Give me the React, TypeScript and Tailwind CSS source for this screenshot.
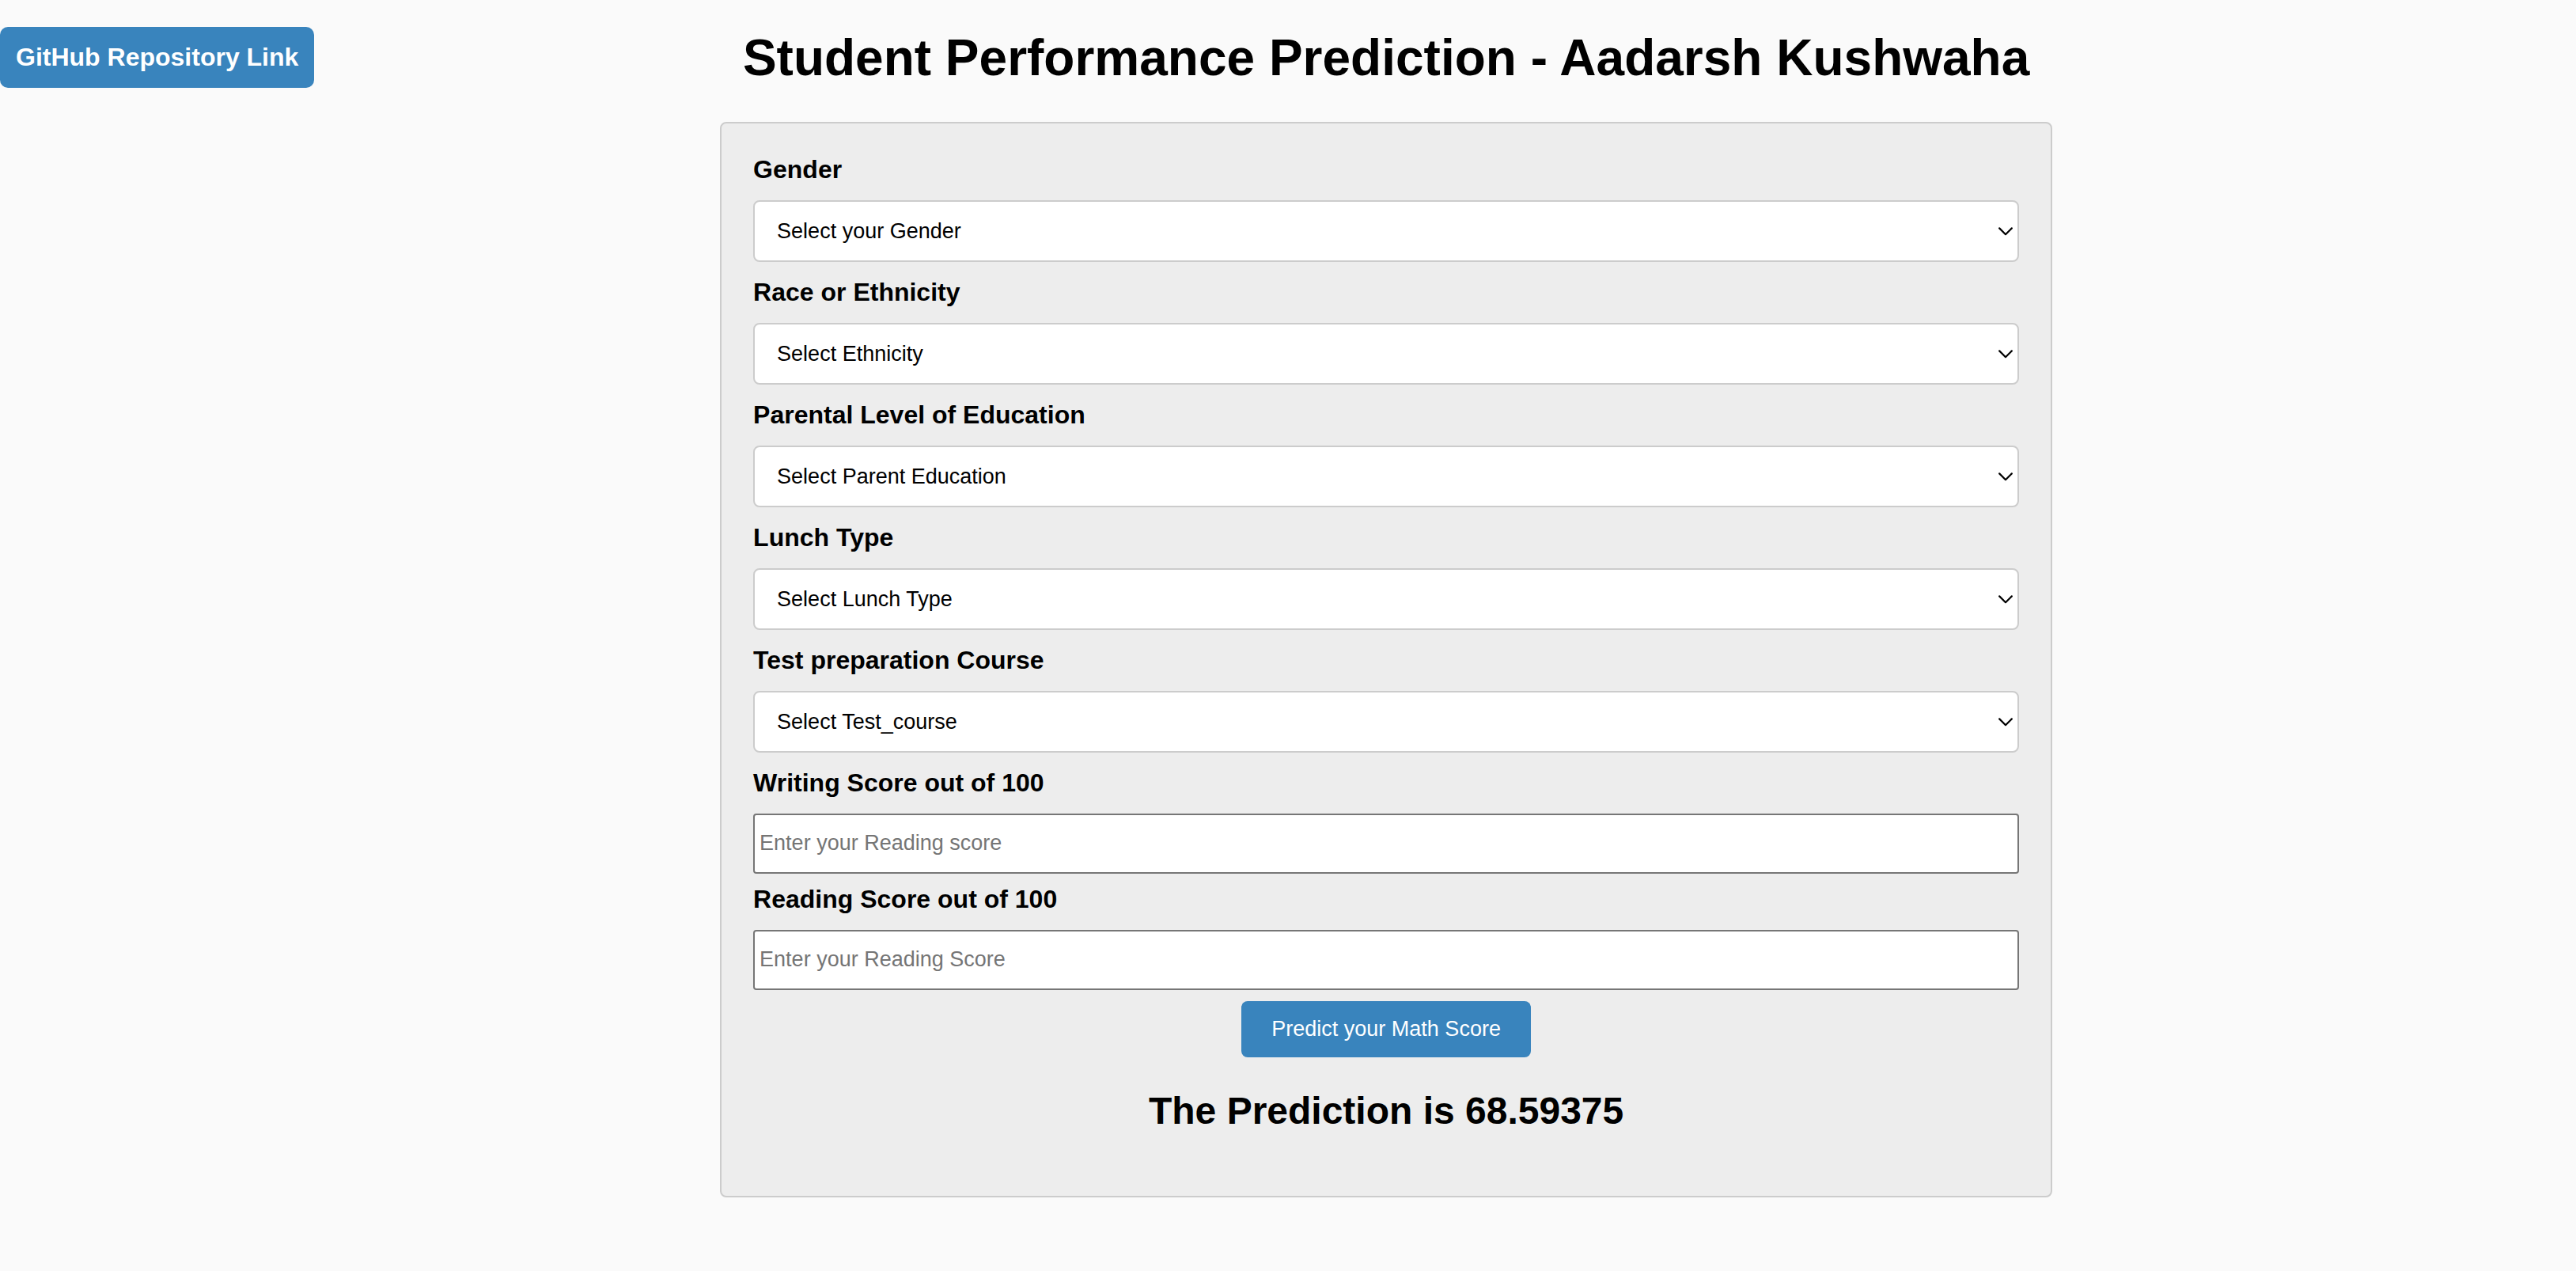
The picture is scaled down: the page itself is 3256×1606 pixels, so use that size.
import { useId } from "react";

const dropdowns = [
  { label: "Gender", name: "gender", placeholder: "Select your Gender", options: ["Male", "Female"] },
  {
    label: "Race or Ethnicity",
    name: "ethnicity",
    placeholder: "Select Ethnicity",
    options: ["Group A", "Group B", "Group C", "Group D", "Group E"],
  },
  {
    label: "Parental Level of Education",
    name: "parental_level_of_education",
    placeholder: "Select Parent Education",
    options: [
      "associate's degree",
      "bachelor's degree",
      "high school",
      "master's degree",
      "some college",
      "some high school",
    ],
  },
  {
    label: "Lunch Type",
    name: "lunch",
    placeholder: "Select Lunch Type",
    options: ["free/reduced", "standard"],
  },
  {
    label: "Test preparation Course",
    name: "test_preparation_course",
    placeholder: "Select Test_course",
    options: ["none", "completed"],
  },
];

const scores = [
  { label: "Writing Score out of 100", name: "writing_score", placeholder: "Enter your Reading score" },
  { label: "Reading Score out of 100", name: "reading_score", placeholder: "Enter your Reading Score" },
];

type DropdownProps = (typeof dropdowns)[number];
type ScoreProps = (typeof scores)[number];

function Dropdown({ label, name, placeholder, options }: DropdownProps) {
  const id = useId();
  return (
    <div className="mb-5 flex flex-col gap-5">
      <label htmlFor={id} className="text-[32px] leading-[37px] font-bold">
        {label}
      </label>
      <div className="relative">
        <select
          id={id}
          name={name}
          defaultValue=""
          className="block h-[78px] w-full appearance-none rounded-lg border-2 border-[#cccccc] bg-white px-7 text-[27px] text-black"
        >
          <option value="">{placeholder}</option>
          {options.map((option) => (
            <option key={option}>{option}</option>
          ))}
        </select>
        <svg
          className="pointer-events-none absolute inset-y-0 right-2 my-auto h-3 w-[18px]"
          viewBox="0 0 18 12"
          fill="none"
          stroke="black"
          strokeWidth="2.2"
          strokeLinecap="round"
          strokeLinejoin="round"
          aria-hidden="true"
        >
          <path d="M1.2 2.4 9 10.2 16.8 2.4" />
        </svg>
      </div>
    </div>
  );
}

function ScoreField({ label, name, placeholder }: ScoreProps) {
  const id = useId();
  return (
    <div className="mb-3.5 flex flex-col gap-5">
      <label htmlFor={id} className="text-[32px] leading-[37px] font-bold">
        {label}
      </label>
      <input
        id={id}
        name={name}
        type="text"
        inputMode="numeric"
        placeholder={placeholder}
        className="block h-[76px] w-full rounded border-2 border-[#767676] bg-white px-1.5 pb-0.5 text-[27px] text-black placeholder:text-[#757575]"
      />
    </div>
  );
}

export default function App() {
  return (
    <div className="min-h-screen bg-[#fafafa] pt-[34px] pb-10 font-['Liberation_Sans',Arial,sans-serif] text-black">
      <div className="grid grid-cols-[11fr_auto_8fr] items-start">
        <div>
          <a
            href="#repository"
            className="inline-block rounded-[10px] bg-[#3984bd] p-5 text-[32px] leading-[37px] font-bold whitespace-nowrap text-white"
          >
            GitHub Repository Link
          </a>
        </div>
        <main>
          <h1 className="mt-0.5 mb-11 text-center text-[64px] leading-[74px] font-bold">
            Student Performance Prediction - Aadarsh Kushwaha
          </h1>
          <form
            className="w-[1684px] max-w-full rounded-lg border-2 border-[#cccccc] bg-[#ededed] p-10"
            onSubmit={(event) => event.preventDefault()}
          >
            {dropdowns.map((field) => (
              <Dropdown key={field.name} {...field} />
            ))}
            {scores.map((field) => (
              <ScoreField key={field.name} {...field} />
            ))}
            <div className="flex justify-center">
              <button
                type="submit"
                className="rounded-lg bg-[#3984bd] px-[38px] py-5 text-[27px] leading-[31px] text-white"
              >
                Predict your Math Score
              </button>
            </div>
            <h2 className="my-10 text-center text-[48px] leading-[55px] font-bold">The Prediction is 68.59375</h2>
          </form>
        </main>
      </div>
    </div>
  );
}
